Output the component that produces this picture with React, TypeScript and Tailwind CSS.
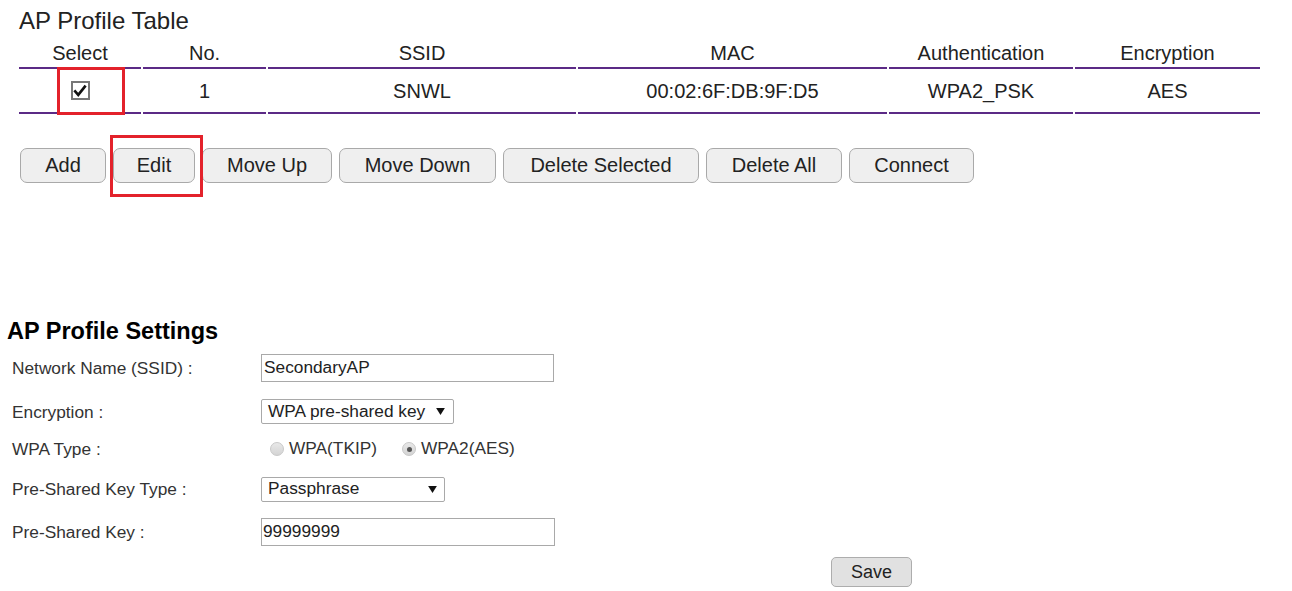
import React from 'react';

const columns = [
  { label: 'Select', w: 'w-[122px]' },
  { label: 'No.', w: 'w-[123px]' },
  { label: 'SSID', w: 'w-[308px]' },
  { label: 'MAC', w: 'w-[309px]' },
  { label: 'Authentication', w: 'w-[184px]' },
  { label: 'Encryption', w: 'w-[185px]' },
];

const buttons = [
  { label: 'Add', w: 'w-[86px]' },
  { label: 'Edit', w: 'w-[82px]' },
  { label: 'Move Up', w: 'w-[130px]' },
  { label: 'Move Down', w: 'w-[157px]' },
  { label: 'Delete Selected', w: 'w-[196px]' },
  { label: 'Delete All', w: 'w-[136px]' },
  { label: 'Connect', w: 'w-[125px]' },
];

function Checkbox() {
  return (
    <span className="inline-flex w-[19px] h-[19px] items-center justify-center border-2 border-[#777] bg-white">
      <svg viewBox="0 0 16 16" className="w-[14px] h-[14px]">
        <path d="M2.5 8.5 L6 12.5 L13.5 3" fill="none" stroke="#111" strokeWidth="3" strokeLinecap="square" />
      </svg>
    </span>
  );
}

function Radio({ checked }: { checked?: boolean }) {
  return (
    <span className="inline-flex w-[14px] h-[14px] rounded-full border border-[#c8c8c8] bg-gradient-to-b from-[#e8e8e8] to-[#d4d4d4] items-center justify-center">
      {checked && <span className="w-[5px] h-[5px] rounded-full bg-[#555]" />}
    </span>
  );
}

function Arrow() {
  return (
    <svg viewBox="0 0 10 8" className="w-[9px] h-[7px]">
      <path d="M0 0 H10 L5 8 Z" fill="#111" />
    </svg>
  );
}

export default function App() {
  return (
    <div className="relative w-[1292px] h-[591px] bg-white overflow-hidden font-['Liberation_Sans',Arial,sans-serif]">
      {/* AP Profile Table */}
      <div className="pt-[7px] pl-[19px]">
        <h2 className="text-[24px] leading-[28px] text-[#222]">AP Profile Table</h2>
        <div className="mt-[7px] flex gap-[2px]">
          {columns.map((c) => (
            <div key={c.label} className={`${c.w} text-center text-[20px] leading-[22px] text-[#222] pb-[3px] border-b-2 border-[#5b2a86]`}>
              {c.label}
            </div>
          ))}
        </div>
        <div className="flex gap-[2px] text-[20px] leading-[22px] text-[#222]">
          <div className={`${columns[0].w} h-[45px] border-b-2 border-[#5b2a86] flex items-center justify-center`}>
            <Checkbox />
          </div>
          <div className={`${columns[1].w} h-[45px] border-b-2 border-[#5b2a86] flex items-center justify-center`}>1</div>
          <div className={`${columns[2].w} h-[45px] border-b-2 border-[#5b2a86] flex items-center justify-center`}>SNWL</div>
          <div className={`${columns[3].w} h-[45px] border-b-2 border-[#5b2a86] flex items-center justify-center`}>00:02:6F:DB:9F:D5</div>
          <div className={`${columns[4].w} h-[45px] border-b-2 border-[#5b2a86] flex items-center justify-center`}>WPA2_PSK</div>
          <div className={`${columns[5].w} h-[45px] border-b-2 border-[#5b2a86] flex items-center justify-center`}>AES</div>
        </div>

        <div className="mt-[34px] ml-[1px] flex gap-[7px]">
          {buttons.map((b) => (
            <button key={b.label} className={`${b.w} h-[35px] pb-[2px] rounded-[7px] border border-[#a9a9a9] bg-[#efefef] text-[20px] text-[#222]`}>
              {b.label}
            </button>
          ))}
        </div>
      </div>

      {/* AP Profile Settings */}
      <div className="mt-[135px] pl-[7px]">
        <h2 className="text-[23.5px] leading-[26px] font-bold text-black">AP Profile Settings</h2>
        <div className="pl-[5px] text-[17.3px] text-[#333]">
          <div className="mt-[10px] h-[28px] flex items-center">
            <span className="w-[249px] pt-[2px]">Network Name (SSID) :</span>
            <div className="w-[293px] h-[28px] border border-[#a9a9a9] pl-[2px] flex items-center text-[#222]">SecondaryAP</div>
          </div>
          <div className="mt-[17px] h-[25px] flex items-center">
            <span className="w-[249px] pt-[2px]">Encryption :</span>
            <div className="w-[193px] h-[25px] border border-[#a9a9a9] rounded-[2px] pl-[6px] pr-[8px] flex items-center justify-between text-[#222]">
              <span>WPA pre-shared key</span>
              <Arrow />
            </div>
          </div>
          <div className="mt-[15px] h-[20px] flex items-center">
            <span className="w-[258px] pt-[2px]">WPA Type :</span>
            <span className="flex items-center gap-[5px]"><Radio /><span>WPA(TKIP)</span></span>
            <span className="ml-[25px] flex items-center gap-[5px]"><Radio checked /><span>WPA2(AES)</span></span>
          </div>
          <div className="mt-[18px] h-[24px] flex items-center">
            <span className="w-[249px] pt-[2px]">Pre-Shared Key Type :</span>
            <div className="w-[184px] h-[25px] border border-[#a9a9a9] rounded-[2px] pl-[6px] pr-[7px] flex items-center justify-between text-[#222]">
              <span>Passphrase</span>
              <Arrow />
            </div>
          </div>
          <div className="mt-[17px] h-[28px] flex items-center">
            <span className="w-[249px] pt-[2px]">Pre-Shared Key :</span>
            <div className="w-[294px] h-[28px] border border-[#a9a9a9] pl-[1px] flex items-center text-[#222]">99999999</div>
          </div>
          <div className="mt-[11px] h-[30px] flex">
            <button className="ml-[819px] w-[81px] h-[30px] rounded-[5px] border border-[#adadad] bg-[#e1e1e1] text-[18px] text-[#222]">
              Save
            </button>
          </div>
        </div>
      </div>

      {/* highlight boxes */}
      <div className="absolute left-[57px] top-[67px] w-[68px] h-[48px] border-[3px] border-[#e3222b]" />
      <div className="absolute left-[110px] top-[135px] w-[93px] h-[62px] border-[3px] border-[#e3222b]" />
    </div>
  );
}
